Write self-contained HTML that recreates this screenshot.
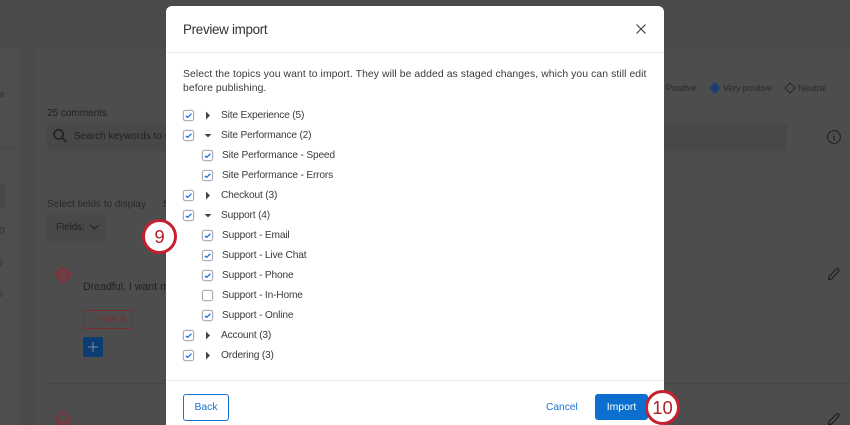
<!DOCTYPE html>
<html><head><meta charset="utf-8">
<style>
html,body{margin:0;padding:0;width:850px;height:425px;overflow:hidden}
body{position:relative;background:#4d4d4d;font-family:"Liberation Sans",sans-serif;color:#323232}
.a{position:absolute;white-space:nowrap}
.bg{color:#222;font-size:10px}
#modal{position:absolute;left:166px;top:6px;width:498px;height:419px;overflow:hidden;background:#fff;border-radius:6px 6px 0 0}
.t{position:absolute;font-size:10.2px;color:#3a3a3a;white-space:nowrap;letter-spacing:-.18px;margin-top:1px}
.cb{position:absolute;width:9px;height:9px;border:1px solid #a9b0bb;border-radius:2.5px;background:#fff;box-shadow:0 0 0 .5px #d8dbe0}
.cb svg{position:absolute;left:0;top:0}
.arr{position:absolute}
.badge{position:absolute;box-sizing:border-box;border:3px solid #c4202f;border-radius:50%;background:#fff;color:#b3202c;text-align:center;font-size:18.5px;width:35px;height:35px;line-height:29px}
</style></head><body>
<div class="a" style="left:0;top:0;width:850px;height:47px;background:#4a4a4a"></div>
<div class="a" style="left:0;top:47px;width:850px;height:1px;background:#464646"></div>
<div class="a" style="left:0;top:48px;width:19px;height:377px;background:#4e4e4e"></div>
<div class="a" style="left:19px;top:48px;width:17px;height:377px;background:#4b4b4b"></div>
<div class="a" style="left:0;top:147px;width:19px;height:1px;background:#464646"></div>
<div class="a" style="left:0;top:183px;width:5px;height:25px;background:#494949"></div>
<div class="a" style="left:0;top:92px;width:4px;height:5px;background:#404040"></div>
<div class="a bg" style="left:-1px;top:226px;color:#333">0</div>
<div class="a bg" style="left:-3px;top:258px;color:#333">5</div>
<div class="a bg" style="left:-3px;top:289px;color:#333">5</div>

<div class="a bg" style="left:47px;top:108px">25 comments</div>
<div class="a" style="left:47px;top:123px;width:740px;height:28px;background:#484848;border-radius:3px"></div>
<svg class="a" style="left:52px;top:128px" width="16" height="16" viewBox="0 0 16 16" fill="none" stroke="#1c1c1c" stroke-width="1.4"><circle cx="6.600" cy="6.400" r="4.600"/><path d="M10 9.800l4.400 4.400"/></svg>
<div class="a bg" style="left:74px;top:131px">Search keywords to s</div>
<div class="a bg" style="left:47px;top:199px;color:#2a2a2a">Select fields to display</div>
<div class="a bg" style="left:163px;top:199px">S</div>
<div class="a" style="left:47px;top:215px;width:59px;height:26px;background:#484848;border-radius:3px"></div>
<div class="a bg" style="left:56px;top:222px;letter-spacing:-.1px">Fields:</div>
<svg class="a" style="left:89px;top:223px" width="11" height="9" fill="none" stroke="#222" stroke-width="1.1"><path d="M1.500 2l4 4 4-4"/></svg>

<svg class="a" style="left:53px;top:265px" width="20" height="20" viewBox="0 0 20 20"><path d="M10 2l8 8-8 8-8-8z" fill="#6e3e42" stroke="#8a2a33" stroke-width="1.3"/></svg>
<div class="a bg" style="left:83px;top:281px;font-size:10.600px">Dreadful. I want my</div>
<div class="a" style="left:83px;top:310px;width:47px;height:17px;border:1px solid #7d2a32;border-radius:2px"></div>
<div class="a" style="left:89px;top:314px;font-size:9px;color:#7d2a32">...Price</div>
<svg class="a" style="left:118px;top:314px" width="10" height="10" fill="none" stroke="#7d2a32" stroke-width="1"><path d="M2 2l6 6M8 2l-6 6"/></svg>
<div class="a" style="left:83px;top:337px;width:20px;height:20px;background:#0b3c72;border-radius:2px"></div>
<svg class="a" style="left:87px;top:341px" width="12" height="12" stroke="#7f8fa3" stroke-width="1"><path d="M6 1v10M1 6h10"/></svg>
<div class="a" style="left:47px;top:383px;width:803px;height:1px;background:#454545"></div>
<svg class="a" style="left:53px;top:409px" width="20" height="20" viewBox="0 0 20 20"><path d="M10 2l8 8-8 8-8-8z" fill="none" stroke="#8a2a33" stroke-width="1.3"/><path d="M4 11h12l-6 6z" fill="#6e3e42"/></svg>

<div class="a bg" style="left:666px;top:83px;font-size:9.300px;letter-spacing:-.3px;color:#2c2c2c">Positive</div>
<svg class="a" style="left:709px;top:82px" width="12" height="12"><path d="M6 .5L11.500 6 6 11.500.5 6z" fill="#1c3d66" stroke="#23497a"/></svg>
<div class="a bg" style="left:723px;top:83px;font-size:9.300px;letter-spacing:-.3px;color:#2c2c2c">Very positive</div>
<svg class="a" style="left:784px;top:82px" width="12" height="12" fill="none" stroke="#2a2a2a"><path d="M6 1l5 5-5 5-5-5z"/></svg>
<div class="a bg" style="left:798px;top:83px;font-size:9.300px;letter-spacing:-.3px;color:#2c2c2c">Neutral</div>
<svg class="a" style="left:826px;top:129px" width="16" height="16" fill="none" stroke="#1e1e1e"><circle cx="8" cy="8" r="6.400"/><path d="M7 5h1M7 7.500h1v3.500h1" stroke-width="1"/></svg>
<svg class="a" style="left:827px;top:267px" width="14" height="14" fill="none" stroke="#1c1c1c" stroke-width="1.1"><path d="M2 9.500L9.500 2q1-.8 2 .2t.3 2L4.500 12 1.500 12.800z"/></svg>
<svg class="a" style="left:827px;top:412px" width="14" height="14" fill="none" stroke="#1c1c1c" stroke-width="1.1"><path d="M2 9.500L9.500 2q1-.8 2 .2t.3 2L4.500 12 1.500 12.800z"/></svg>

<div id="modal">
<div class="a" style="left:17px;top:15px;font-size:13.400px;letter-spacing:-.3px;color:#333;margin-top:1px">Preview import</div>
<svg class="a" style="left:469px;top:17px" width="12" height="12" fill="none" stroke="#444" stroke-width="1.2"><path d="M1.500 1.500l9 9M10.500 1.500l-9 9"/></svg>
<div class="a" style="left:0;top:46px;width:498px;height:1px;background:#eeeeee"></div>
<div class="t" style="left:17px;top:62px;font-size:10.400px;letter-spacing:.08px">Select the topics you want to import. They will be added as staged changes, which you can still edit</div>
<div class="t" style="left:17px;top:76px;font-size:10.400px;letter-spacing:.08px">before publishing.</div>

<div class="cb" style="left:17px;top:104px"><svg width="9" height="9" fill="none" stroke="#1272d8" stroke-width="1.3"><path d="M1.800 4.800l1.800 1.600 3.800-3.600"/></svg></div>
<svg class="arr" style="left:39px;top:105px" width="6" height="9"><path d="M1 .5l4 4-4 4z" fill="#444"/></svg>
<div class="t" style="left:55px;top:103px">Site Experience (5)</div>

<div class="cb" style="left:17px;top:124px"><svg width="9" height="9" fill="none" stroke="#1272d8" stroke-width="1.3"><path d="M1.800 4.800l1.800 1.600 3.800-3.600"/></svg></div>
<svg class="arr" style="left:38px;top:127px" width="8" height="6"><path d="M.5 1h7l-3.500 3.500z" fill="#444"/></svg>
<div class="t" style="left:55px;top:123px">Site Performance (2)</div>

<div class="cb" style="left:36px;top:144px"><svg width="9" height="9" fill="none" stroke="#1272d8" stroke-width="1.3"><path d="M1.800 4.800l1.800 1.600 3.800-3.600"/></svg></div>
<div class="t" style="left:56px;top:143px">Site Performance - Speed</div>

<div class="cb" style="left:36px;top:164px"><svg width="9" height="9" fill="none" stroke="#1272d8" stroke-width="1.3"><path d="M1.800 4.800l1.800 1.600 3.800-3.600"/></svg></div>
<div class="t" style="left:56px;top:163px">Site Performance - Errors</div>

<div class="cb" style="left:17px;top:184px"><svg width="9" height="9" fill="none" stroke="#1272d8" stroke-width="1.3"><path d="M1.800 4.800l1.800 1.600 3.800-3.600"/></svg></div>
<svg class="arr" style="left:39px;top:185px" width="6" height="9"><path d="M1 .5l4 4-4 4z" fill="#444"/></svg>
<div class="t" style="left:55px;top:183px">Checkout (3)</div>

<div class="cb" style="left:17px;top:204px"><svg width="9" height="9" fill="none" stroke="#1272d8" stroke-width="1.3"><path d="M1.800 4.800l1.800 1.600 3.800-3.600"/></svg></div>
<svg class="arr" style="left:38px;top:207px" width="8" height="6"><path d="M.5 1h7l-3.500 3.500z" fill="#444"/></svg>
<div class="t" style="left:55px;top:203px">Support (4)</div>

<div class="cb" style="left:36px;top:224px"><svg width="9" height="9" fill="none" stroke="#1272d8" stroke-width="1.3"><path d="M1.800 4.800l1.800 1.600 3.800-3.600"/></svg></div>
<div class="t" style="left:56px;top:223px">Support - Email</div>

<div class="cb" style="left:36px;top:244px"><svg width="9" height="9" fill="none" stroke="#1272d8" stroke-width="1.3"><path d="M1.800 4.800l1.800 1.600 3.800-3.600"/></svg></div>
<div class="t" style="left:56px;top:243px">Support - Live Chat</div>

<div class="cb" style="left:36px;top:264px"><svg width="9" height="9" fill="none" stroke="#1272d8" stroke-width="1.3"><path d="M1.800 4.800l1.800 1.600 3.800-3.600"/></svg></div>
<div class="t" style="left:56px;top:263px">Support - Phone</div>

<div class="cb" style="left:36px;top:284px"></div>
<div class="t" style="left:56px;top:283px">Support - In-Home</div>

<div class="cb" style="left:36px;top:304px"><svg width="9" height="9" fill="none" stroke="#1272d8" stroke-width="1.3"><path d="M1.800 4.800l1.800 1.600 3.800-3.600"/></svg></div>
<div class="t" style="left:56px;top:303px">Support - Online</div>

<div class="cb" style="left:17px;top:324px"><svg width="9" height="9" fill="none" stroke="#1272d8" stroke-width="1.3"><path d="M1.800 4.800l1.800 1.600 3.800-3.600"/></svg></div>
<svg class="arr" style="left:39px;top:325px" width="6" height="9"><path d="M1 .5l4 4-4 4z" fill="#444"/></svg>
<div class="t" style="left:55px;top:323px">Account (3)</div>

<div class="cb" style="left:17px;top:344px"><svg width="9" height="9" fill="none" stroke="#1272d8" stroke-width="1.3"><path d="M1.800 4.800l1.800 1.600 3.800-3.600"/></svg></div>
<svg class="arr" style="left:39px;top:345px" width="6" height="9"><path d="M1 .5l4 4-4 4z" fill="#444"/></svg>
<div class="t" style="left:55px;top:343px">Ordering (3)</div>

<div class="a" style="left:0;top:374px;width:498px;height:1px;background:#eeeeee"></div>
<div class="a" style="left:17px;top:388px;width:44px;height:25px;border:1px solid #1a73d4;border-radius:3px;text-align:center;line-height:26px;font-size:10.400px;color:#1a73d4">Back</div>
<div class="a" style="left:380px;top:396px;font-size:10.200px;color:#1a73d4">Cancel</div>
<div class="a" style="left:429px;top:388px;width:53px;height:26px;background:#0b6fd0;border-radius:3px;text-align:center;line-height:27px;font-size:10.400px;color:#fff">Import</div>
</div>

<div class="badge" style="left:142px;top:219px">9</div>
<div class="badge" style="left:645px;top:390px">10</div>
</body></html>
